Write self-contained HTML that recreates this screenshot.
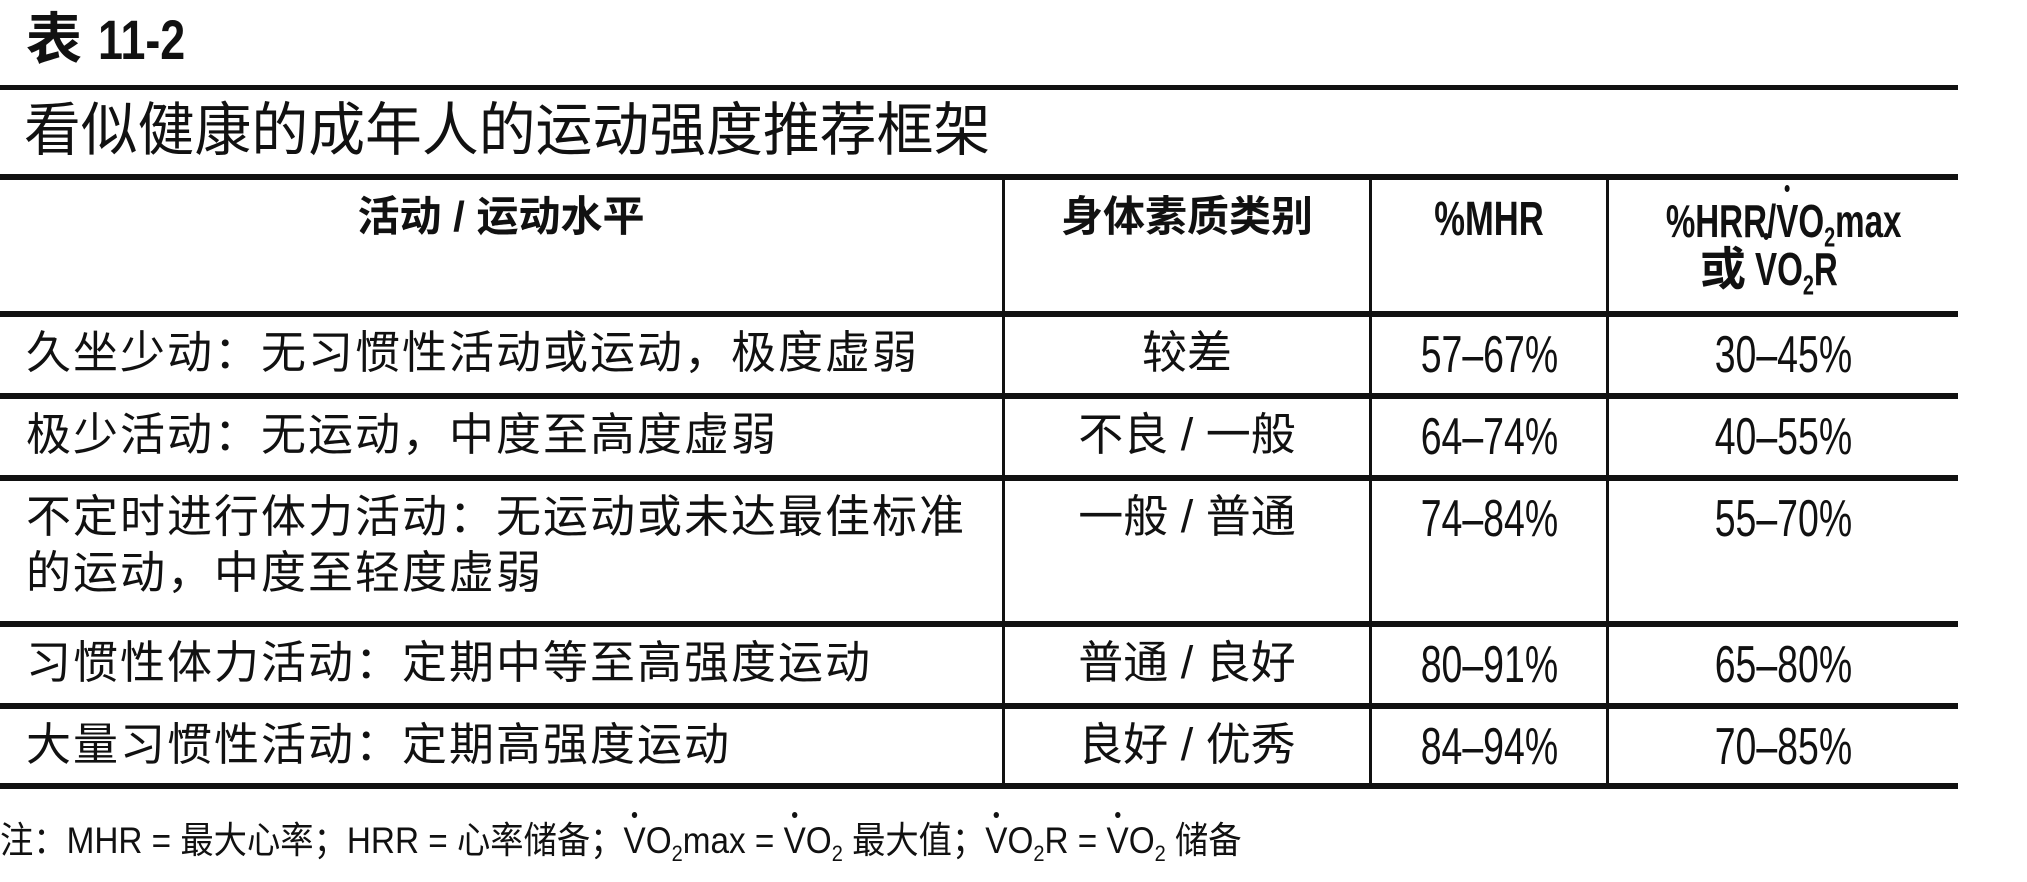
<!DOCTYPE html>
<html><head><meta charset="utf-8"><style>
html,body{margin:0;padding:0;background:#fff;}
body{width:2027px;height:882px;position:relative;overflow:hidden;font-family:"Liberation Sans","Noto Sans CJK SC",sans-serif;color:#111;}
.h{position:absolute;background:#111;}
.t{position:absolute;white-space:nowrap;line-height:1;}
.c{text-align:center;}
.nn{display:inline-block;transform:scaleX(0.72);transform-origin:center;}
.nl{display:inline-block;transform:scaleX(0.72);transform-origin:left;}
sub{font-size:0.6em;vertical-align:-0.35em;line-height:0;}
.dot{position:relative;display:inline-block;}
.dot:before{content:"";position:absolute;left:50%;top:-0.28em;width:0.16em;height:0.16em;margin-left:-0.08em;border-radius:50%;background:#111;}
</style></head><body>
<div class="t" style="left:26px;top:12px;font-size:56px;font-weight:bold;">表 <span class="nl" style="transform:scaleX(0.8)">11-2</span></div>
<div class="h" style="left:0;top:85px;width:1958px;height:5px"></div>
<div class="t" style="left:24px;top:102px;font-size:58px;"><span class="nl" style="transform:scaleX(0.98)">看似健康的成年人的运动强度推荐框架</span></div>
<div class="h" style="left:0;top:174px;width:1958px;height:6px"></div>
<div class="h" style="left:0;top:311px;width:1958px;height:6px"></div>
<div class="h" style="left:0;top:393px;width:1958px;height:6px"></div>
<div class="h" style="left:0;top:475px;width:1958px;height:6px"></div>
<div class="h" style="left:0;top:621px;width:1958px;height:6px"></div>
<div class="h" style="left:0;top:703px;width:1958px;height:6px"></div>
<div class="h" style="left:0;top:783px;width:1958px;height:6px"></div>
<div class="h" style="left:1002px;top:176px;width:3px;height:610px"></div>
<div class="h" style="left:1369px;top:176px;width:3px;height:610px"></div>
<div class="h" style="left:1606px;top:176px;width:3px;height:610px"></div>

<div class="t c" style="left:0;width:1002px;top:196px;font-size:42px;font-weight:bold;">活动 / 运动水平</div>
<div class="t c" style="left:1005px;width:364px;top:196px;font-size:42px;font-weight:bold;">身体素质类别</div>
<div class="t c" style="left:1372px;width:234px;top:196px;font-size:48px;font-weight:bold;"><span class="nn">%MHR</span></div>
<div class="t c" style="left:1609px;width:349px;top:198px;font-size:46px;font-weight:bold;"><span class="nn">%HRR/<span class="dot">V</span>O<sub>2</sub>max</span></div>
<div class="t" style="left:1700px;top:246px;font-size:46px;font-weight:bold;">或 <span class="nl" style="margin-left:-4px"><span class="dot">V</span>O<sub>2</sub>R</span></div>

<div class="t" style="left:26px;top:330px;font-size:45px;letter-spacing:2px;">久坐少动：无习惯性活动或运动，极度虚弱</div>
<div class="t" style="left:26px;top:412px;font-size:45px;letter-spacing:2px;">极少活动：无运动，中度至高度虚弱</div>
<div class="t" style="left:26px;top:494px;font-size:45px;letter-spacing:2px;">不定时进行体力活动：无运动或未达最佳标准</div>
<div class="t" style="left:26px;top:550px;font-size:45px;letter-spacing:2px;">的运动，中度至轻度虚弱</div>
<div class="t" style="left:26px;top:640px;font-size:45px;letter-spacing:2px;">习惯性体力活动：定期中等至高强度运动</div>
<div class="t" style="left:26px;top:722px;font-size:45px;letter-spacing:2px;">大量习惯性活动：定期高强度运动</div>

<div class="t c" style="left:1005px;width:364px;top:330px;font-size:45px;">较差</div>
<div class="t c" style="left:1005px;width:364px;top:412px;font-size:45px;">不良 / 一般</div>
<div class="t c" style="left:1005px;width:364px;top:494px;font-size:45px;">一般 / 普通</div>
<div class="t c" style="left:1005px;width:364px;top:640px;font-size:45px;">普通 / 良好</div>
<div class="t c" style="left:1005px;width:364px;top:722px;font-size:45px;">良好 / 优秀</div>

<div class="t c" style="left:1372px;width:234px;top:329px;font-size:52px;"><span class="nn">57–67%</span></div>
<div class="t c" style="left:1372px;width:234px;top:411px;font-size:52px;"><span class="nn">64–74%</span></div>
<div class="t c" style="left:1372px;width:234px;top:493px;font-size:52px;"><span class="nn">74–84%</span></div>
<div class="t c" style="left:1372px;width:234px;top:639px;font-size:52px;"><span class="nn">80–91%</span></div>
<div class="t c" style="left:1372px;width:234px;top:721px;font-size:52px;"><span class="nn">84–94%</span></div>

<div class="t c" style="left:1609px;width:349px;top:329px;font-size:52px;"><span class="nn">30–45%</span></div>
<div class="t c" style="left:1609px;width:349px;top:411px;font-size:52px;"><span class="nn">40–55%</span></div>
<div class="t c" style="left:1609px;width:349px;top:493px;font-size:52px;"><span class="nn">55–70%</span></div>
<div class="t c" style="left:1609px;width:349px;top:639px;font-size:52px;"><span class="nn">65–80%</span></div>
<div class="t c" style="left:1609px;width:349px;top:721px;font-size:52px;"><span class="nn">70–85%</span></div>

<div class="t" style="left:0;top:822px;font-size:37px;"><span class="nl" style="transform:scaleX(0.9)">注：MHR = 最大心率；HRR = 心率储备；<span class="dot">V</span>O<sub>2</sub>max = <span class="dot">V</span>O<sub>2</sub> 最大值；<span class="dot">V</span>O<sub>2</sub>R = <span class="dot">V</span>O<sub>2</sub> 储备</span></div>
</body></html>
